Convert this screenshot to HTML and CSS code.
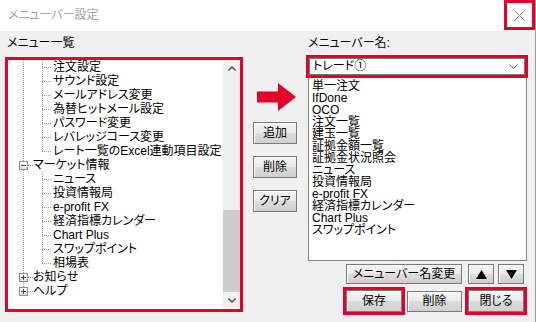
FILE: index.html
```html
<!DOCTYPE html>
<html lang="ja">
<head>
  <meta charset="UTF-8">
  <title>メニューバー設定</title>
  <link rel="stylesheet" href="styles.css">
</head>
<body>
  <div class="window">
    <div class="titlebar">
      <span class="title">メニューバー設定</span>
      <div class="close hl">
        <svg width="11" height="11" viewBox="0 0 11 11"><path d="M0.5 0.5 L10.5 10.5 M10.5 0.5 L0.5 10.5" stroke="#8a8a8a" stroke-width="1" fill="none"/></svg>
      </div>
    </div>

    <div class="content">
      <!-- Menu list -->
      <div class="col-left">
        <div class="label">メニュー一覧</div>
        <div class="tree-box hl">
          <div class="tree">
            <div class="rows">
              <div class="row"><span class="g line"></span><span class="g branch"></span><span class="txt">注文設定</span></div>
              <div class="row"><span class="g line"></span><span class="g branch"></span><span class="txt">サウンド設定</span></div>
              <div class="row"><span class="g line"></span><span class="g branch"></span><span class="txt">メールアドレス変更</span></div>
              <div class="row"><span class="g line"></span><span class="g branch"></span><span class="txt">為替ヒットメール設定</span></div>
              <div class="row"><span class="g line"></span><span class="g branch"></span><span class="txt">パスワード変更</span></div>
              <div class="row"><span class="g line"></span><span class="g branch"></span><span class="txt">レバレッジコース変更</span></div>
              <div class="row"><span class="g line"></span><span class="g branch end"></span><span class="txt">レート一覧のExcel連動項目設定</span></div>
              <div class="row"><span class="g node"><i class="box minus"></i></span><span class="txt top">マーケット情報</span></div>
              <div class="row"><span class="g line"></span><span class="g branch"></span><span class="txt">ニュース</span></div>
              <div class="row"><span class="g line"></span><span class="g branch"></span><span class="txt">投資情報局</span></div>
              <div class="row"><span class="g line"></span><span class="g branch"></span><span class="txt">e-profit FX</span></div>
              <div class="row"><span class="g line"></span><span class="g branch"></span><span class="txt">経済指標カレンダー</span></div>
              <div class="row"><span class="g line"></span><span class="g branch"></span><span class="txt">Chart Plus</span></div>
              <div class="row"><span class="g line"></span><span class="g branch"></span><span class="txt">スワップポイント</span></div>
              <div class="row"><span class="g line"></span><span class="g branch end"></span><span class="txt">相場表</span></div>
              <div class="row"><span class="g node"><i class="box plus"></i></span><span class="txt top">お知らせ</span></div>
              <div class="row"><span class="g node end"><i class="box plus"></i></span><span class="txt top">ヘルプ</span></div>
            </div>
          </div>
          <div class="vscroll">
            <div class="sb-btn">
              <svg width="8" height="5" viewBox="0 0 8 5"><path d="M0.5 4.5 L4 1 L7.5 4.5" stroke="#606060" stroke-width="1.6" fill="none"/></svg>
            </div>
            <div class="sb-track"><div class="sb-thumb"></div></div>
            <div class="sb-btn">
              <svg width="8" height="5" viewBox="0 0 8 5"><path d="M0.5 0.5 L4 4 L7.5 0.5" stroke="#606060" stroke-width="1.6" fill="none"/></svg>
            </div>
          </div>
        </div>
      </div>

      <!-- Add / remove -->
      <div class="col-mid">
        <svg class="arrow" width="40" height="28" viewBox="0 0 40 28">
          <path d="M0 8.5 H21 V0 L39 14 L21 28 V19.5 H0 Z" fill="#e4002b"/>
        </svg>
        <button class="btn mid">追加</button>
        <button class="btn mid">削除</button>
        <button class="btn mid">クリア</button>
      </div>

      <!-- Menu bar -->
      <div class="col-right">
        <div class="label">メニューバー名:</div>
        <div class="combo-wrap hl">
          <div class="combo">
            <span>トレード①</span>
            <svg width="9" height="5" viewBox="0 0 9 5"><path d="M0.5 0.5 L4.5 4.5 L8.5 0.5" stroke="#606060" stroke-width="1" fill="none"/></svg>
          </div>
        </div>
        <div class="list">
          <div class="item">単一注文</div>
          <div class="item">IfDone</div>
          <div class="item">OCO</div>
          <div class="item">注文一覧</div>
          <div class="item">建玉一覧</div>
          <div class="item">証拠金額一覧</div>
          <div class="item">証拠金状況照会</div>
          <div class="item">ニュース</div>
          <div class="item">投資情報局</div>
          <div class="item">e-profit FX</div>
          <div class="item">経済指標カレンダー</div>
          <div class="item">Chart Plus</div>
          <div class="item">スワップポイント</div>
        </div>
        <div class="btn-row first">
          <button class="btn rename">メニューバー名変更</button>
          <button class="btn arrow-btn">
            <svg width="11" height="9" viewBox="0 0 11 9"><path d="M5.5 0 L11 9 H0 Z" fill="#000"/></svg>
          </button>
          <button class="btn arrow-btn down">
            <svg width="11" height="9" viewBox="0 0 11 9"><path d="M0 0 H11 L5.5 9 Z" fill="#000"/></svg>
          </button>
        </div>
        <div class="btn-row second">
          <div class="btn-wrap hl"><button class="btn foot">保存</button></div>
          <button class="btn foot del">削除</button>
          <div class="btn-wrap hl last"><button class="btn foot">閉じる</button></div>
        </div>
      </div>
    </div>
  </div>
</body>
</html>
```

FILE: styles.css
```css
/* General */
body {
  margin: 0;
  font-family: "Liberation Sans", "Noto Sans CJK JP", sans-serif;
  font-size: 12px;
  font-feature-settings: "palt";
  color: #000;
  background: #f0f0f0;
}

.window {
  width: 536px;
  height: 322px;
  box-sizing: border-box;
  border-right: 1px solid #9a9a9a;
  background: #f0f0f0;
}

.hl {
  border: 3px solid #e4002b;
  box-sizing: border-box;
}

/* Title bar */
.titlebar {
  height: 31px;
  background: #fff;
  display: flex;
  align-items: flex-start;
  justify-content: space-between;
}

.title {
  margin: 7px 0 0 8px;
  color: #a3a3a3;
  line-height: 16px;
}

.close {
  width: 31px;
  height: 30px;
  display: flex;
  align-items: center;
  justify-content: center;
}

/* Columns */
.content {
  display: flex;
  height: 291px;
}

.label {
  line-height: 16px;
  margin-top: 4px;
}

.col-left {
  width: 238px;
  margin-left: 5px;
}

.col-left .label {
  margin-left: 2px;
}

.col-mid {
  width: 63px;
  display: flex;
  flex-direction: column;
  align-items: flex-start;
}

.col-right {
  width: 222px;
}

.col-right .label {
  margin-left: 2px;
}

/* Tree */
.tree-box {
  margin-top: 6px;
  height: 255px;
  display: flex;
}

.tree {
  flex: 1;
  background: #fff;
  overflow: hidden;
}

.rows {
  padding-left: 6px;
}

.row {
  display: flex;
  height: 14px;
  line-height: 14px;
  white-space: nowrap;
}

.g {
  --vdots: repeating-linear-gradient(to bottom, #a0a0a0 0 1px, transparent 1px 2px);
  --hdots: repeating-linear-gradient(to right, #a0a0a0 0 1px, transparent 1px 2px);
  flex: none;
  width: 19px;
  height: 14px;
}

.g.line {
  background: var(--vdots) 9px 0 / 1px 14px no-repeat;
}

.g.branch {
  background: var(--hdots) 9px 7px / 10px 1px no-repeat, var(--vdots) 9px 0 / 1px 14px no-repeat;
}

.g.branch.end {
  background: var(--hdots) 9px 7px / 10px 1px no-repeat, var(--vdots) 9px 0 / 1px 7px no-repeat;
}

.g.node {
  display: flex;
  align-items: center;
  padding-left: 5px;
  box-sizing: border-box;
  background: var(--hdots) 14px 7px / 5px 1px no-repeat, var(--vdots) 9px 0 / 1px 14px no-repeat;
}

.g.node.end {
  background: var(--hdots) 14px 7px / 5px 1px no-repeat, var(--vdots) 9px 0 / 1px 7px no-repeat;
}

.box {
  width: 9px;
  height: 9px;
  box-sizing: border-box;
  border: 1px solid #8f8f8f;
  margin-top: 1px;
}

.box.minus {
  background: linear-gradient(#2c4a9a, #2c4a9a) center / 5px 1px no-repeat, linear-gradient(#ffffff, #dedede);
}

.box.plus {
  background: linear-gradient(#2c4a9a, #2c4a9a) center / 5px 1px no-repeat, linear-gradient(#2c4a9a, #2c4a9a) center / 1px 5px no-repeat, linear-gradient(#ffffff, #dedede);
}

.txt {
  margin-left: 1px;
}

.txt.top {
  margin-left: 0;
}

/* Scrollbar */
.vscroll {
  width: 17px;
  display: flex;
  flex-direction: column;
  background: #f0f0f0;
}

.sb-btn {
  height: 17px;
  display: flex;
  align-items: center;
  justify-content: center;
}

.sb-track {
  flex: 1;
  display: flex;
  flex-direction: column;
  justify-content: flex-end;
}

.sb-thumb {
  height: 82px;
  background: #cdcdcd;
}

/* Buttons */
.btn {
  font: inherit;
  color: #000;
  padding: 0;
  border: 1px solid #7a7a7a;
  border-radius: 0;
  background: linear-gradient(#f3f3f3 0%, #ebebeb 50%, #dddddd 50%, #cfcfcf 100%);
  box-shadow: inset 1px 1px 0 #fcfcfc;
  display: flex;
  align-items: center;
  justify-content: center;
  line-height: 14px;
  box-sizing: border-box;
}

.arrow {
  margin: 52px 0 0 14px;
}

.btn.mid {
  width: 44px;
  height: 22px;
  margin-left: 10px;
  margin-top: 11px;
}

.btn.mid + .btn.mid {
  margin-top: 12px;
}

/* Combo + list */
.combo-wrap {
  margin-top: 4px;
  height: 23px;
}

.combo {
  height: 17px;
  border: 1px solid #7a7a7a;
  box-sizing: border-box;
  background: #fff;
  display: flex;
  align-items: center;
  justify-content: space-between;
  padding: 0 6px 0 3px;
  line-height: 15px;
}

.list {
  margin: 0 1px 0 2px;
  height: 183px;
  box-sizing: border-box;
  border: 1px solid #828282;
  border-top: none;
  background: #fff;
  padding: 2px 0 0 3px;
  overflow: hidden;
}

.item {
  height: 12px;
  line-height: 12px;
  white-space: nowrap;
}

.btn-row {
  display: flex;
  justify-content: flex-end;
  align-items: center;
}

.btn-row.first {
  margin-top: 3px;
  height: 20px;
  padding-right: 4px;
}

.btn.rename {
  width: 116px;
  height: 20px;
  margin-right: 6px;
}

.btn.arrow-btn {
  width: 26px;
  height: 20px;
}

.btn.arrow-btn.down {
  margin-left: 4px;
}

.btn-row.second {
  margin-top: 3px;
  height: 28px;
  padding-right: 1px;
}

.btn-wrap {
  width: 62px;
  height: 28px;
}

.btn.foot {
  width: 56px;
  height: 22px;
}

.btn.foot.del {
  width: 55px;
  height: 21px;
  margin: 0 3px 0 2px;
}
```
